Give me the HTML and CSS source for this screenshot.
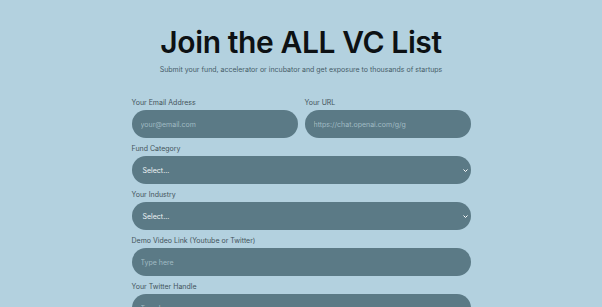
FILE: index.html
```html
<!DOCTYPE html>
<html>
<head>
<meta charset="utf-8">
<link rel="stylesheet" href="styles.css">
</head>
<body>
<main class="page">
  <h1 class="title">Join the ALL VC List</h1>
  <p class="subtitle">Submit your fund, accelerator or incubator and get exposure to thousands of startups</p>
  <form class="form">
    <div class="row two">
      <div class="field">
        <label class="label">Your Email Address</label>
        <input class="input" type="text" placeholder="your@email.com">
      </div>
      <div class="field">
        <label class="label">Your URL</label>
        <input class="input" type="text" placeholder="https://chat.openai.com/g/g">
      </div>
    </div>
    <div class="field">
      <label class="label">Fund Category</label>
      <div class="select"><span>Select...</span><svg class="chev" viewBox="0 0 10 6" width="5" height="3"><path d="M1 1l4 4 4-4" fill="none" stroke="#fff" stroke-width="2"/></svg></div>
    </div>
    <div class="field">
      <label class="label">Your Industry</label>
      <div class="select"><span>Select...</span><svg class="chev" viewBox="0 0 10 6" width="5" height="3"><path d="M1 1l4 4 4-4" fill="none" stroke="#fff" stroke-width="2"/></svg></div>
    </div>
    <div class="field">
      <label class="label">Demo Video Link (Youtube or Twitter)</label>
      <input class="input" type="text" placeholder="Type here">
    </div>
    <div class="field">
      <label class="label">Your Twitter Handle</label>
      <input class="input" type="text" placeholder="Type here">
    </div>
  </form>
</main>
</body>
</html>
```
FILE: styles.css
```css
html, body {
  margin: 0;
  padding: 0;
  background: #b3d1df;
  font-family: Inter, "Noto Sans", sans-serif;
  overflow: hidden;
  height: 307px;
}
.page {
  width: 339px;
  margin: 0 auto;
  padding-top: 24px;
}
.title {
  margin: 0;
  text-align: center;
  font-size: 30px;
  font-weight: 600;
  letter-spacing: -0.4px;
  color: #0d1114;
  line-height: 36px;
}
.subtitle {
  margin: 5px -20px 0;
  text-align: center;
  font-size: 7px;
  color: #465c68;
  line-height: 10px;
}
.form {
  margin-top: 23px;
  display: flex;
  flex-direction: column;
  gap: 6px;
}
.row.two {
  display: flex;
  gap: 7px;
}
.row.two .field { flex: 1; }
.field {
  display: flex;
  flex-direction: column;
}
.label {
  font-size: 7px;
  color: #43535b;
  line-height: 9px;
  margin-bottom: 3px;
}
.input, .select {
  box-sizing: border-box;
  height: 28px;
  width: 100%;
  border: none;
  border-radius: 14px;
  background: #5b7a86;
  padding: 0 9px;
  font-family: Inter, "Noto Sans", sans-serif;
  font-size: 7px;
  color: #e8f0f3;
  outline: none;
}
.input::placeholder { color: #a0bac4; }
.select {
  display: flex;
  align-items: center;
  justify-content: space-between;
  padding: 0 3px 0 11px;
  color: #eef3f5;
}
.chev { display: block; }
```
